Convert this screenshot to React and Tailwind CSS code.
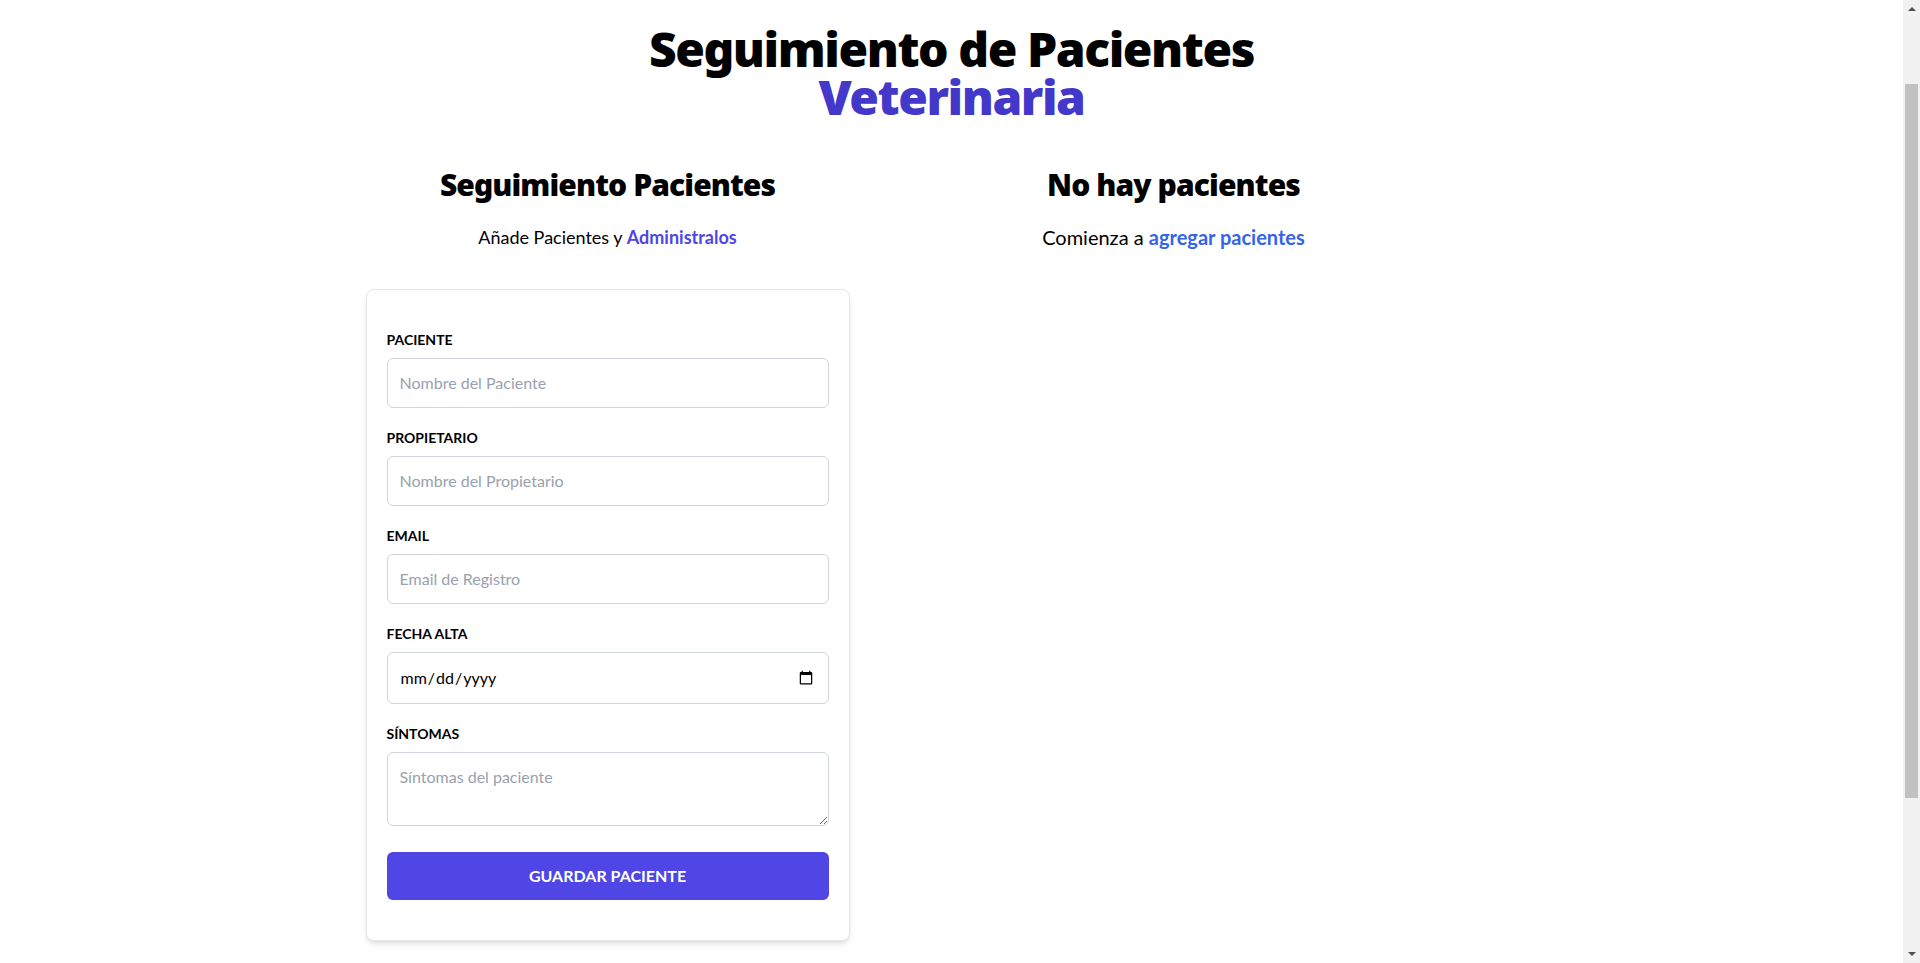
import { useState } from "react"

const font = { fontFamily: "Lato, 'Noto Sans', sans-serif" }
const heading = { fontFamily: "'Noto Sans', Lato, sans-serif" }

function Field({ label, children }) {
  return (
    <div className="mb-5">
      <label className="block text-sm font-bold uppercase text-black">{label}</label>
      {children}
    </div>
  )
}

function Formulario() {
  const [form, setForm] = useState({ nombre: "", propietario: "", email: "", fecha: "", sintomas: "" })
  const update = (key) => (e) => setForm({ ...form, [key]: e.target.value })

  const inputCls =
    "mt-2 w-full rounded-md border border-gray-300 p-3 text-base text-black placeholder-gray-400 outline-none"

  return (
    <form className="rounded-lg border border-gray-200 bg-white px-5 py-10 shadow-md" onSubmit={(e) => e.preventDefault()}>
      <Field label="Paciente">
        <input type="text" placeholder="Nombre del Paciente" className={inputCls} value={form.nombre} onChange={update("nombre")} />
      </Field>
      <Field label="Propietario">
        <input type="text" placeholder="Nombre del Propietario" className={inputCls} value={form.propietario} onChange={update("propietario")} />
      </Field>
      <Field label="Email">
        <input type="email" placeholder="Email de Registro" className={inputCls} value={form.email} onChange={update("email")} />
      </Field>
      <Field label="Fecha Alta">
        <input type="date" className={`${inputCls} h-[52px]`} value={form.fecha} onChange={update("fecha")} />
      </Field>
      <Field label="Síntomas">
        <textarea placeholder="Síntomas del paciente" className={inputCls} value={form.sintomas} onChange={update("sintomas")} />
      </Field>
      <button type="submit" className="w-full rounded-md bg-[#4f46e5] p-3 text-base font-bold uppercase text-white">
        Guardar Paciente
      </button>
    </form>
  )
}

// window scrollbar as seen in the screenshot
function Scrollbar() {
  return (
    <div className="flex h-screen w-[17px] shrink-0 flex-col items-center bg-[#f1f1f1]">
      <div className="flex h-[17px] items-center justify-center">
        <svg width="8" height="5" viewBox="0 0 8 5"><path d="M0 5 L4 1 L8 5 Z" fill="#505050" /></svg>
      </div>
      <div className="mt-[67px] h-[714px] w-[13px] bg-[#c1c1c1]" />
      <div className="flex-1" />
      <div className="flex h-[17px] items-center justify-center">
        <svg width="8" height="5" viewBox="0 0 8 5"><path d="M0 0 L4 4 L8 0 Z" fill="#505050" /></svg>
      </div>
    </div>
  )
}

export default function App() {
  return (
    <div className="flex h-screen overflow-hidden bg-white text-black" style={font}>
      <main className="min-w-0 flex-1 pt-[25px]">
        <h1 className="text-center text-5xl font-black leading-none tracking-[-0.03em]" style={heading}>
          Seguimiento de Pacientes
          <span className="block text-[#4338ca]">Veterinaria</span>
        </h1>

        <div className="mx-auto mt-[46px] flex w-[1172px] pr-10">
          <div className="mb-10 w-[484px]">
            <h2 className="text-center text-3xl font-black tracking-[-0.03em]" style={heading}>Seguimiento Pacientes</h2>
            <p className="mb-[38px] mt-5 text-center text-lg">
              Añade Pacientes y <span className="font-bold text-[#4f46e5]">Administralos</span>
            </p>
            <Formulario />
          </div>

          <div className="flex-1">
            <h2 className="text-center text-3xl font-black tracking-[-0.03em]" style={heading}>No hay pacientes</h2>
            <p className="mb-10 mt-5 text-center text-xl">
              Comienza a <span className="font-bold text-[#3563e9]">agregar pacientes</span>
            </p>
          </div>
        </div>
      </main>
      <Scrollbar />
    </div>
  )
}
